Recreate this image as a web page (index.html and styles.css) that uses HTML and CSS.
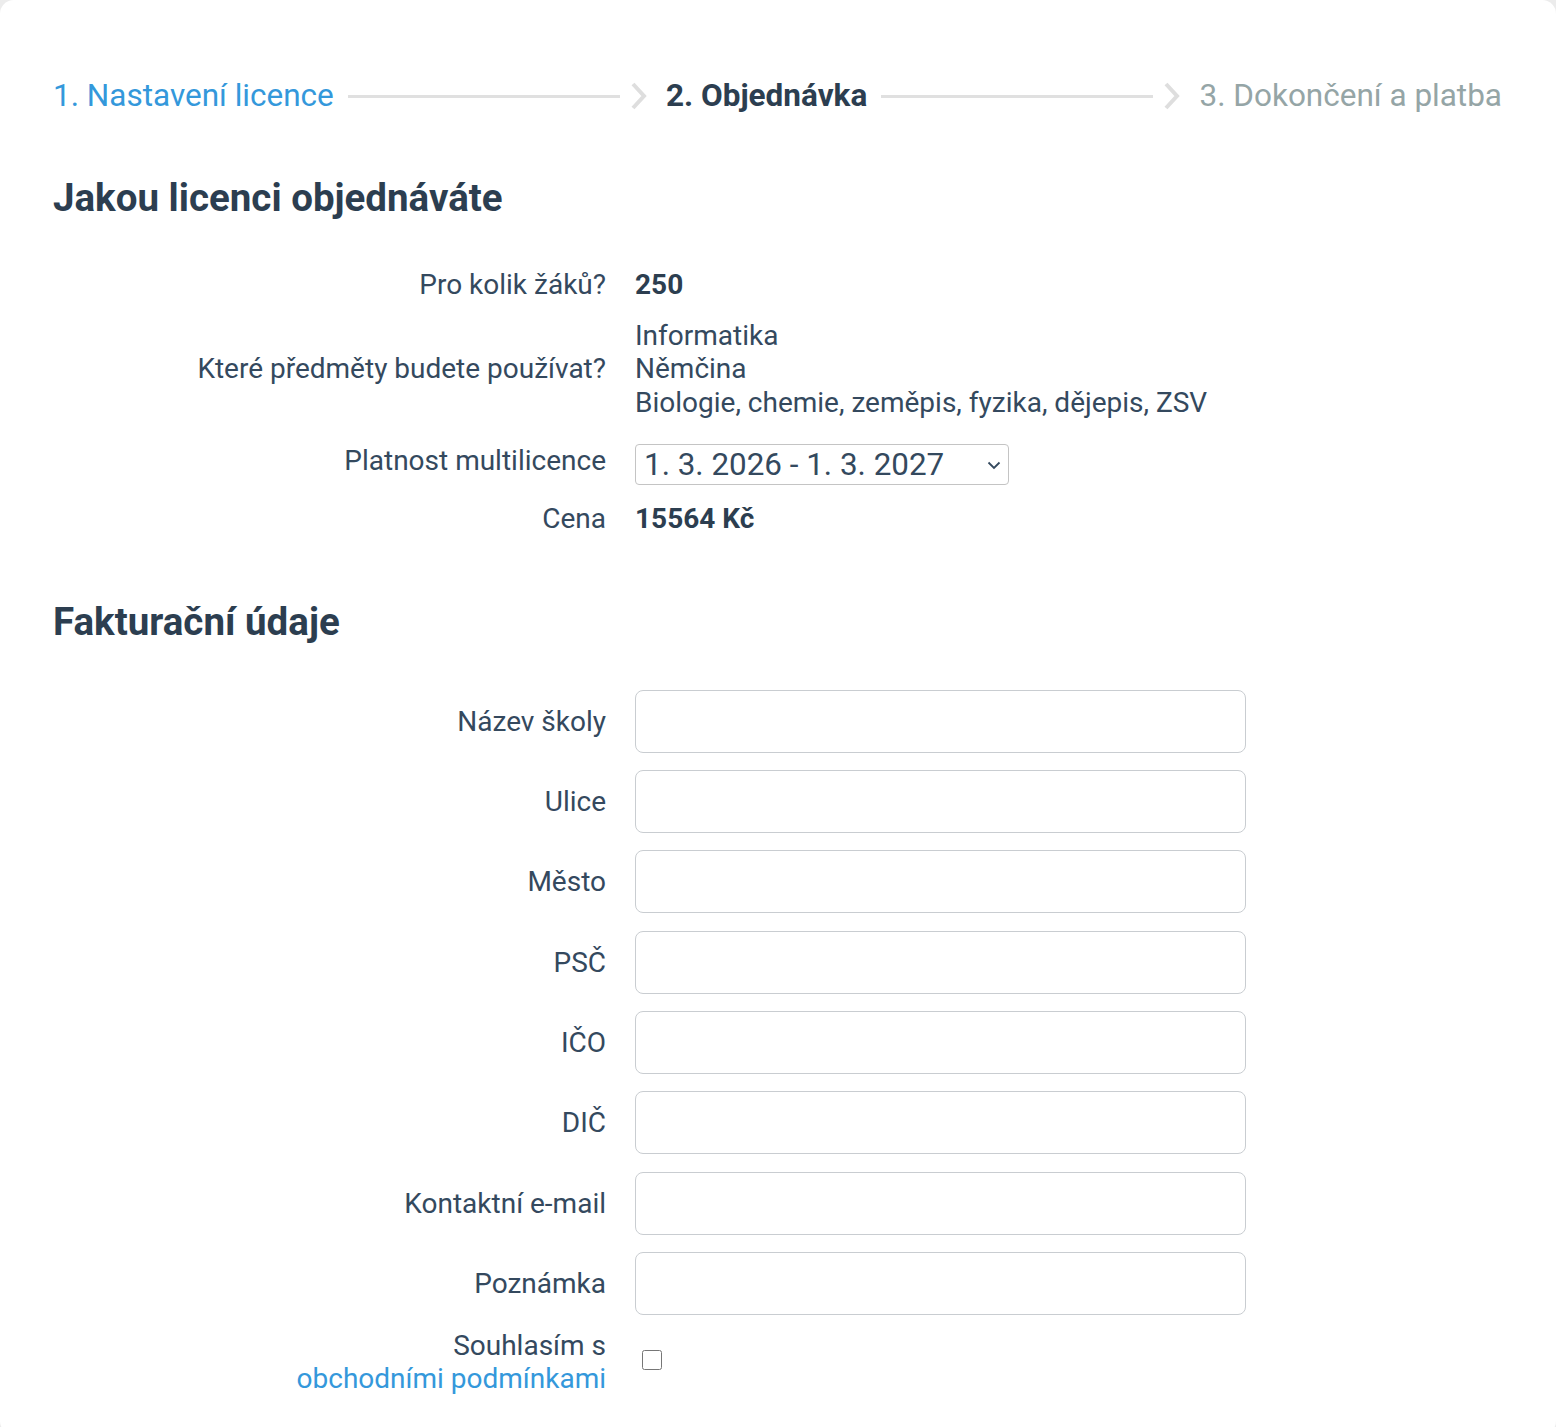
FILE: index.html
```html
<!DOCTYPE html>
<html lang="cs">
<head>
    <meta charset="UTF-8">
    <meta name="viewport" content="width=device-width, initial-scale=1.0">
    <title>Objednávka multilicence</title>
    <link rel="stylesheet" href="styles.css">
</head>
<body>

    <div class="card">

        <!-- Kroky objednavky -->
        <div class="steps">
            <a class="step done" href="#">1. Nastavení licence</a>
            <span class="step-line"></span>
            <svg class="chevron" width="16" height="28" viewBox="0 0 16 28"><path d="M2 2 L13 14 L2 26" fill="none" stroke="#dedede" stroke-width="4"/></svg>
            <span class="step active">2. Objednávka</span>
            <span class="step-line"></span>
            <svg class="chevron" width="16" height="28" viewBox="0 0 16 28"><path d="M2 2 L13 14 L2 26" fill="none" stroke="#dedede" stroke-width="4"/></svg>
            <span class="step">3. Dokončení a platba</span>
        </div>

        <h2>Jakou licenci objednáváte</h2>

        <div class="summary">
            <div class="label">Pro kolik žáků?</div>
            <div class="value"><strong>250</strong></div>

            <div class="label">Které předměty budete používat?</div>
            <div class="value subjects">
                Informatika<br>
                Němčina<br>
                Biologie, chemie, zeměpis, fyzika, dějepis, ZSV
            </div>

            <div class="label">Platnost multilicence</div>
            <div class="value">
                <div class="select-box">
                    <select id="validity" name="validity">
                        <option>1. 3. 2026 - 1. 3. 2027</option>
                    </select>
                    <svg class="select-arrow" width="14" height="9" viewBox="0 0 14 9"><path d="M1.5 1.5 L7 7 L12.5 1.5" fill="none" stroke="#34495e" stroke-width="1.8"/></svg>
                </div>
            </div>

            <div class="label">Cena</div>
            <div class="value"><strong>15564 Kč</strong></div>
        </div>

        <h2 class="billing-title">Fakturační údaje</h2>

        <form class="billing" action="#" method="POST">
            <label for="school">Název školy</label>
            <input type="text" id="school" name="school">

            <label for="street">Ulice</label>
            <input type="text" id="street" name="street">

            <label for="city">Město</label>
            <input type="text" id="city" name="city">

            <label for="zip">PSČ</label>
            <input type="text" id="zip" name="zip">

            <label for="ico">IČO</label>
            <input type="text" id="ico" name="ico">

            <label for="dic">DIČ</label>
            <input type="text" id="dic" name="dic">

            <label for="email">Kontaktní e-mail</label>
            <input type="text" id="email" name="email">

            <label for="note">Poznámka</label>
            <input type="text" id="note" name="note">

            <label for="terms" class="terms-label">Souhlasím s<br><a href="#">obchodními podmínkami</a></label>
            <div class="terms-box"><input type="checkbox" id="terms" name="terms"></div>
        </form>

    </div>

</body>
</html>
```

FILE: styles.css
```css
* {
    margin: 0;
    padding: 0;
    box-sizing: border-box;
}

body {
    font-family: Roboto, "Liberation Sans", sans-serif;
    background-color: #ececec;
    color: #34495e;
}

.card {
    background-color: white;
    border-radius: 14px;
    padding: 76px 54px 40px 53px;
    min-height: 1427px;
}

/* kroky */
.steps {
    display: flex;
    align-items: center;
    font-size: 31.5px;
    line-height: 40px;
}

.step {
    color: #95a5a6;
    text-decoration: none;
    white-space: nowrap;
}

.step.done {
    color: #3498db;
}

.step.active {
    color: #2c3e50;
    font-weight: bold;
}

.step-line {
    flex: 1;
    height: 3px;
    background-color: #e0e0e0;
    margin: 0 14px;
}

.chevron {
    margin-left: -3px;
    margin-right: 19px;
    flex-shrink: 0;
}

h2 {
    color: #2c3e50;
    font-size: 38.5px;
    font-weight: bold;
    margin-top: 58px;
    line-height: 48px;
}

/* souhrn licence */
.summary {
    display: grid;
    grid-template-columns: 553px 1fr;
    column-gap: 29px;
    row-gap: 17px;
    align-items: center;
    margin-top: 46px;
    font-size: 28px;
    line-height: 33.5px;
}

.label {
    text-align: right;
}

.value strong {
    color: #2c3e50;
}

.select-box {
    position: relative;
    width: 374px;
    margin-top: 8px;
}

.select-box select {
    display: block;
    width: 100%;
    height: 41px;
    appearance: none;
    -webkit-appearance: none;
    background: white;
    border: 1px solid #c4c4c4;
    border-radius: 4px;
    padding: 0 8px;
    font-family: Roboto, sans-serif;
    font-size: 31.4px;
    color: #34495e;
}

.select-arrow {
    position: absolute;
    right: 8px;
    top: 17px;
    pointer-events: none;
}

.billing-title {
    margin-top: 62px;
}

/* fakturacni udaje */
.billing {
    display: grid;
    grid-template-columns: 553px 611px;
    column-gap: 29px;
    row-gap: 17.4px;
    align-items: center;
    margin-top: 44px;
    font-size: 28px;
    line-height: 33px;
}

.billing label {
    text-align: right;
}

.billing input[type="text"] {
    height: 63px;
    border: 1px solid #c9cdd1;
    border-radius: 8px;
    padding: 0 12px;
    font-size: 24px;
    font-family: Roboto, sans-serif;
}

.billing a {
    color: #3498db;
    text-decoration: none;
}

.terms-label {
    margin-top: -4px;
}

.terms-box {
    align-self: start;
    margin-top: 17px;
    padding-left: 7px;
}

.terms-box input {
    width: 20px;
    height: 20px;
    display: block;
}
```
